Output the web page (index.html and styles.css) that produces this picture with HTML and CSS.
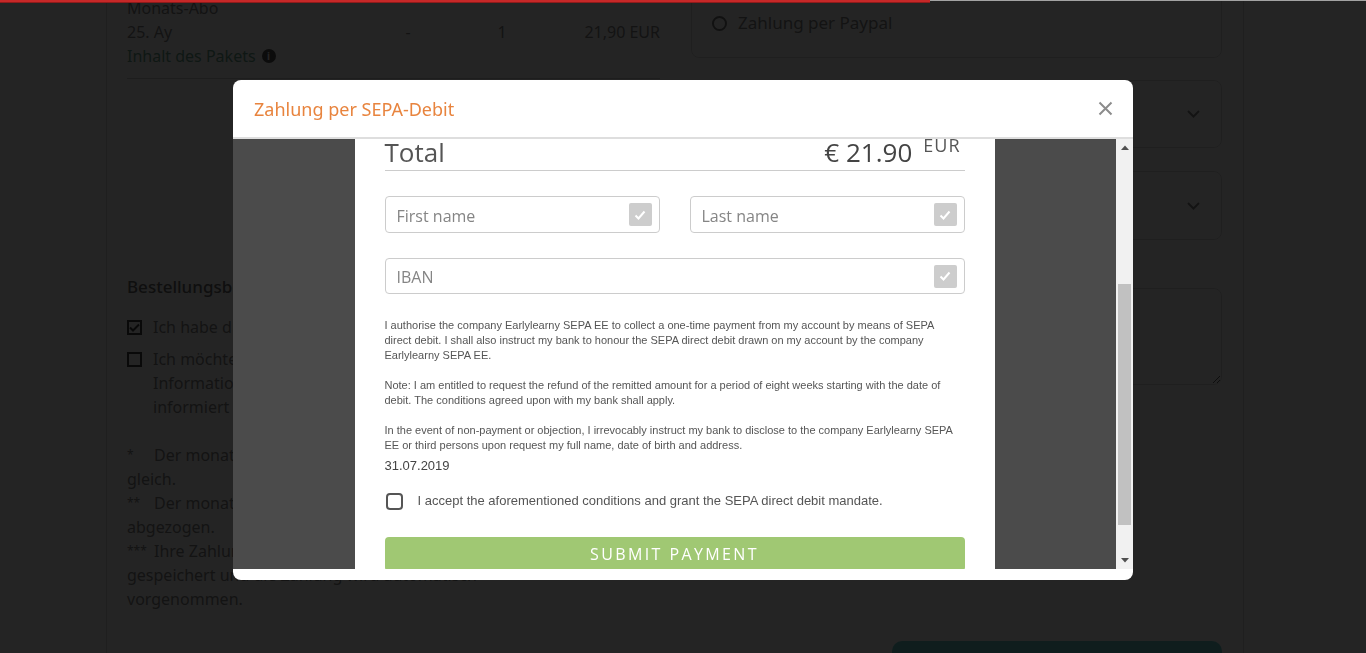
FILE: index.html
```html
<!DOCTYPE html>
<html lang="de">
<head>
    <meta charset="UTF-8">
    <meta name="viewport" content="width=device-width, initial-scale=1.0">
    <title>Bestellung abschließen</title>
    <link rel="stylesheet" href="styles.css">
</head>
<body>
    <div class="progress"><div class="progress-bar"></div></div>

    <div class="page">
        <div class="order">
            <div class="col-left">
                <div class="product">
                    <div class="product-name">
                        <div>Monats-Abo</div>
                        <div>25. Ay</div>
                        <div class="package">Inhalt des Pakets <span class="info">i</span></div>
                    </div>
                    <div class="cell-center">-</div>
                    <div class="cell-center">1</div>
                    <div class="cell-right">21,90 EUR</div>
                </div>

                <div class="totals">
                    <div class="total-line"><span>Zwischensumme</span><span>21,90 EUR</span></div>
                    <div class="total-line"><span>Rabatt</span><span>0,00 EUR</span></div>
                    <div class="total-line"><span>Gesamt</span><span>21,90 EUR</span></div>
                </div>
                <div class="coupon"><span>Gutscheincode einlösen</span></div>

                <h3 class="terms-title">Bestellungsbedingungen</h3>
                <div class="check-row">
                    <span class="box">
                        <svg width="11" height="9" viewBox="0 0 11 9"><path d="M1 4.5l3 3L10 1.5" fill="none" stroke="#444" stroke-width="2"/></svg>
                    </span>
                    <span>Ich habe die AGB gelesen und akzeptiere sie.</span>
                </div>
                <div class="check-row">
                    <span class="box"></span>
                    <span>Ich möchte den Newsletter erhalten und über neue<br>Informationen, Angebote und Aktionen per E-Mail<br>informiert werden.</span>
                </div>

                <div class="notes">
                    <p><span class="mark">*</span>Der monatliche Betrag bleibt für die gesamte Laufzeit<br>gleich.</p>
                    <p><span class="mark">**</span>Der monatliche Betrag wird automatisch vom Konto<br>abgezogen.</p>
                    <p><span class="mark">***</span>Ihre Zahlungsdaten werden beim Zahlungsanbieter sicher<br>gespeichert und die Zahlung wird automatisch<br>vorgenommen.</p>
                </div>
            </div>

            <div class="col-right">
                <div class="pay-box">
                    <div class="radio-row"><span class="radio"></span>Zahlung per SEPA-Lastschrift</div>
                    <div class="radio-row"><span class="radio"></span>Zahlung per Paypal</div>
                </div>
                <div class="select-box">
                    <span>Land auswählen</span>
                    <svg width="13" height="8" viewBox="0 0 13 8"><path d="M1 1l5.5 5.5L12 1" fill="none" stroke="#8a8a8a" stroke-width="2"/></svg>
                </div>
                <div class="select-box tall">
                    <span>Bundesland auswählen</span>
                    <svg width="13" height="8" viewBox="0 0 13 8"><path d="M1 1l5.5 5.5L12 1" fill="none" stroke="#8a8a8a" stroke-width="2"/></svg>
                </div>
                <label class="field-label">Anmerkungen zur Bestellung</label>
                <textarea class="remarks"></textarea>
                <button class="buy-btn" type="button">Jetzt kaufen</button>
            </div>
        </div>
    </div>

    <div class="backdrop"></div>

    <div class="modal-wrap">
        <div class="modal">
            <div class="modal-header">
                <span class="modal-title">Zahlung per SEPA-Debit</span>
                <svg class="close" width="15" height="15" viewBox="0 0 15 15"><path d="M1.5 1.5l12 12M13.5 1.5l-12 12" stroke="#8c8c8c" stroke-width="2"/></svg>
            </div>
            <div class="modal-body">
                <div class="frame">
                    <div class="card">
                        <div class="total-row">
                            <span class="total-label">Total</span>
                            <span class="price"><span class="amount">€ 21.90</span><span class="currency">EUR</span></span>
                        </div>

                        <div class="field-row">
                            <div class="field">
                                <input type="text" placeholder="First name">
                                <span class="ok"><svg width="12" height="10" viewBox="0 0 12 10"><path d="M1.5 5.5l3 3L10.5 1.5" fill="none" stroke="#fff" stroke-width="2"/></svg></span>
                            </div>
                            <div class="field">
                                <input type="text" placeholder="Last name">
                                <span class="ok"><svg width="12" height="10" viewBox="0 0 12 10"><path d="M1.5 5.5l3 3L10.5 1.5" fill="none" stroke="#fff" stroke-width="2"/></svg></span>
                            </div>
                        </div>
                        <div class="field wide">
                            <input type="text" placeholder="IBAN">
                            <span class="ok"><svg width="12" height="10" viewBox="0 0 12 10"><path d="M1.5 5.5l3 3L10.5 1.5" fill="none" stroke="#fff" stroke-width="2"/></svg></span>
                        </div>

                        <div class="mandate">
                            <p>I authorise the company Earlylearny SEPA EE to collect a one-time payment from my account by means of SEPA direct debit. I shall also instruct my bank to honour the SEPA direct debit drawn on my account by the company Earlylearny SEPA EE.</p>
                            <p>Note: I am entitled to request the refund of the remitted amount for a period of eight weeks starting with the date of debit. The conditions agreed upon with my bank shall apply.</p>
                            <p>In the event of non-payment or objection, I irrevocably instruct my bank to disclose to the company Earlylearny SEPA EE or third persons upon request my full name, date of birth and address.</p>
                        </div>
                        <div class="date">31.07.2019</div>

                        <label class="accept">
                            <span class="accept-box"></span>
                            <span>I accept the aforementioned conditions and grant the SEPA direct debit mandate.</span>
                        </label>

                        <button class="submit" type="button">SUBMIT PAYMENT</button>
                    </div>
                </div>
                <div class="scrollbar">
                    <div class="arrow"><svg width="8" height="5" viewBox="0 0 8 5"><path d="M0 5L4 0.5L8 5z" fill="#505050"/></svg></div>
                    <div class="track"><div class="thumb"></div></div>
                    <div class="arrow"><svg width="8" height="5" viewBox="0 0 8 5"><path d="M0 0L4 4.5L8 0z" fill="#505050"/></svg></div>
                </div>
            </div>
        </div>
    </div>
</body>
</html>
```

FILE: styles.css
```css
body {
    margin: 0;
    background-color: #fff;
    font-family: "Noto Sans", "Liberation Sans", sans-serif;
    font-size: 16px;
    line-height: 24px;
    color: #888;
    overflow: hidden;
}

/* top loading bar */
.progress {
    position: fixed;
    top: 0;
    left: 0;
    right: 0;
    height: 1px;
    background-color: #a3a3a3;
    z-index: 30;
}
.progress-bar {
    width: 930px;
    height: 3px;
    background-color: #c62828;
    border-bottom: 1px solid #8e1b1b;
    box-sizing: border-box;
}

/* page behind the dialog */
.page {
    width: 1138px;
    min-height: 800px;
    margin: -60px 0 0 106px;
    padding: 0 21px 0 20px;
    box-sizing: border-box;
    border-left: 1px solid #ddd;
    border-right: 1px solid #ddd;
}
.order {
    display: grid;
    grid-template-columns: 533px 531px;
    column-gap: 31px;
    align-items: start;
}
.col-left {
    padding-top: 56px;
}
.product {
    display: grid;
    grid-template-columns: 251px 60px 128px 94px;
    align-items: center;
    padding-bottom: 10px;
    border-bottom: 1px solid #ccc;
}
.package {
    color: #6aa58c;
    display: flex;
    align-items: center;
    gap: 6px;
}
.info {
    width: 14px;
    height: 14px;
    border-radius: 50%;
    background-color: #555;
    color: #fff;
    font-size: 10px;
    line-height: 14px;
    text-align: center;
    font-weight: bold;
}
.cell-center {
    text-align: center;
}
.cell-right {
    text-align: right;
}
.totals {
    padding: 24px 0;
}
.total-line {
    display: flex;
    justify-content: flex-end;
    gap: 40px;
}
.coupon {
    height: 40px;
    text-align: right;
    line-height: 40px;
}
.terms-title {
    margin: 36px 0 16px;
    font-size: 17px;
    font-weight: 500;
    line-height: 24px;
    color: #6a6a6a;
}
.check-row {
    display: flex;
    gap: 11px;
    margin-bottom: 8px;
    white-space: nowrap;
}
.box {
    flex: none;
    width: 15px;
    height: 15px;
    margin-top: 5px;
    border: 2px solid #444;
    box-sizing: border-box;
    display: flex;
    align-items: center;
    justify-content: center;
}
.notes {
    margin-top: 24px;
}
.notes p {
    margin: 0;
    white-space: nowrap;
}
.mark {
    display: inline-block;
    width: 27px;
    font-size: 12px;
    vertical-align: top;
}

.pay-box {
    height: 118px;
    padding: 28px 20px 18px;
    box-sizing: border-box;
    border: 1px solid #ddd;
    border-radius: 8px;
}
.radio-row {
    height: 36px;
    display: flex;
    align-items: center;
    gap: 11px;
    font-size: 17px;
}
.radio {
    width: 15px;
    height: 15px;
    border: 2px solid #777;
    border-radius: 50%;
    box-sizing: border-box;
}
.select-box {
    height: 68px;
    margin-top: 22px;
    padding: 0 21px 0 20px;
    box-sizing: border-box;
    border: 1px solid #ddd;
    border-radius: 8px;
    display: flex;
    align-items: center;
    justify-content: space-between;
}
.select-box.tall {
    height: 69px;
    margin-top: 23px;
}
.field-label {
    display: block;
    margin-top: 24px;
}
.remarks {
    display: block;
    width: 100%;
    height: 97px;
    box-sizing: border-box;
    border: 1px solid #ddd;
    border-radius: 8px;
}
.buy-btn {
    display: block;
    width: 330px;
    height: 52px;
    margin: 256px 0 0 auto;
    padding-top: 20px;
    border: none;
    border-radius: 10px;
    background-color: #6bcfcf;
    color: #fff;
    font-family: inherit;
    font-size: 16px;
}

/* dialog */
.backdrop {
    position: fixed;
    inset: 0;
    background-color: rgba(0, 0, 0, 0.86);
    z-index: 10;
}
.modal-wrap {
    position: fixed;
    inset: 0;
    display: flex;
    justify-content: center;
    align-items: flex-start;
    padding-top: 80px;
    z-index: 20;
}
.modal {
    width: 900px;
    background-color: #fff;
    border-radius: 8px;
    overflow: hidden;
    padding-bottom: 11px;
}
.modal-header {
    height: 57px;
    padding: 0 20px 0 21px;
    border-bottom: 2px solid #dedede;
    display: flex;
    align-items: center;
    justify-content: space-between;
}
.modal-title {
    font-size: 18px;
    color: #e8843e;
}
.modal-body {
    height: 430px;
    display: flex;
    background-color: #4b4b4b;
}
.frame {
    flex: 1;
    overflow: hidden;
    display: flex;
    justify-content: center;
}
.card {
    width: 640px;
    padding: 0 30px 40px;
    box-sizing: border-box;
    background-color: #fff;
    align-self: flex-start;
    font-family: "Open Sans", sans-serif;
}
.total-row {
    height: 32px;
    box-sizing: border-box;
    border-bottom: 1px solid #ccc;
    display: flex;
    justify-content: space-between;
    align-items: flex-start;
}
.total-label {
    font-size: 26px;
    line-height: 26px;
    color: #555;
}
.price {
    display: flex;
    align-items: flex-start;
    margin-right: 4px;
}
.amount {
    font-size: 26px;
    line-height: 26px;
    color: #444;
}
.currency {
    font-size: 18px;
    line-height: 18px;
    letter-spacing: 1px;
    margin: -3px 0 0 11px;
    color: #555;
}
.field-row {
    display: grid;
    grid-template-columns: 1fr 1fr;
    column-gap: 30px;
    margin-top: 25px;
}
.field {
    height: 37px;
    box-sizing: border-box;
    border: 1px solid #ccc;
    border-radius: 4px;
    display: flex;
    align-items: center;
    padding: 0 7px 0 11px;
}
.field.wide {
    height: 36px;
    margin-top: 25px;
}
.field input {
    flex: 1;
    min-width: 0;
    border: none;
    outline: none;
    padding: 2px 0 0;
    background: transparent;
    font-family: "Open Sans", sans-serif;
    font-size: 16px;
    color: #555;
}
.field input::placeholder {
    color: #858585;
}
.ok {
    width: 23px;
    height: 23px;
    border-radius: 2px;
    background-color: #cdcdcd;
    display: flex;
    align-items: center;
    justify-content: center;
}
.mandate {
    margin-top: 24px;
    padding-right: 8px;
    font-family: "Liberation Sans", Arial, sans-serif;
    font-size: 11px;
    line-height: 15px;
    color: #555;
}
.mandate p {
    margin: 0 0 15px;
}
.mandate p:last-child {
    margin-bottom: 0;
}
.date {
    margin-top: 4px;
    font-family: "Liberation Sans", Arial, sans-serif;
    font-size: 13px;
    line-height: 18px;
    color: #444;
}
.accept {
    margin-top: 17px;
    display: flex;
    align-items: center;
    gap: 15px;
    padding-left: 1px;
    font-family: "Liberation Sans", Arial, sans-serif;
    font-size: 13px;
    line-height: 18px;
    color: #555;
}
.accept-box {
    width: 17px;
    height: 17px;
    box-sizing: border-box;
    border: 2px solid #555;
    border-radius: 4px;
}
.submit {
    display: block;
    width: 100%;
    margin-top: 27px;
    padding: 8px 0;
    border: none;
    border-radius: 4px;
    background-color: #a0c873;
    color: #fff;
    font-family: "Open Sans", sans-serif;
    font-size: 16px;
    line-height: 18px;
    letter-spacing: 2.4px;
}
.scrollbar {
    width: 17px;
    background-color: #f1f1f1;
    display: flex;
    flex-direction: column;
}
.arrow {
    height: 17px;
    display: flex;
    align-items: center;
    justify-content: center;
}
.track {
    flex: 1;
    padding: 128px 2px 0;
}
.thumb {
    height: 241px;
    background-color: #c1c1c1;
}
```
